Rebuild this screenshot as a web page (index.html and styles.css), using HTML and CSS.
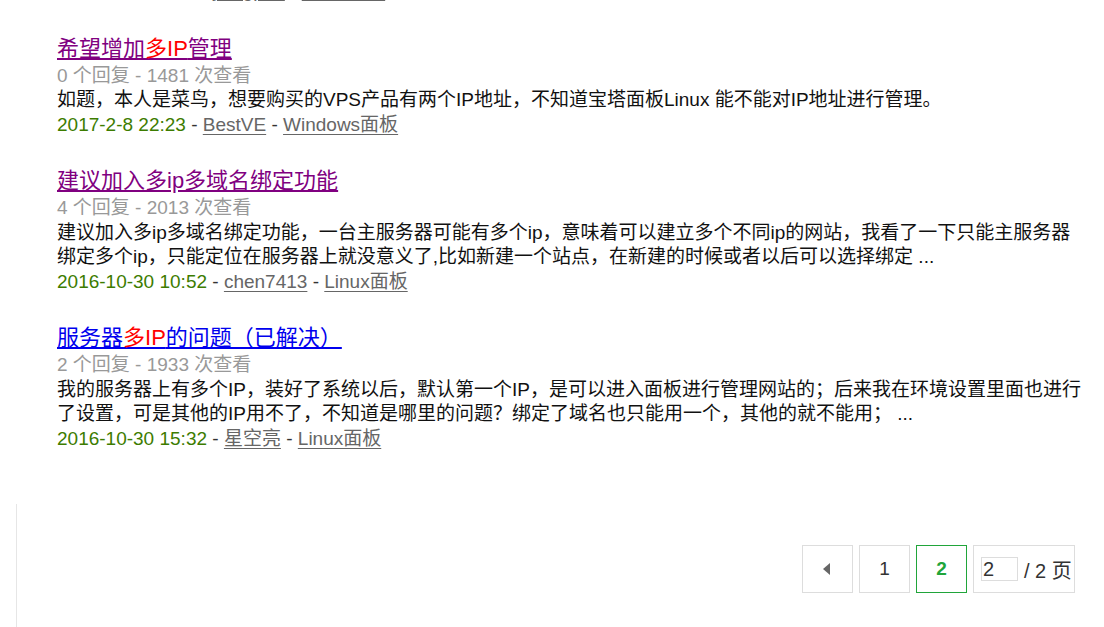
FILE: index.html
```html
<!DOCTYPE html>
<html lang="zh-CN">
<head>
    <meta charset="UTF-8" />
    <title>搜索结果 - 多IP</title>
    <link rel="stylesheet" href="styles.css">
</head>
<body>
<div class="topic-list">
    <!-- 上一条，已滚出视口 -->
    <div class="topic">
        <div class="topic-title"><a href="#">宝塔面板如何绑定<span class="hl">多IP</span></a></div>
        <div class="topic-stat">1 个回复 - 1022 次查看</div>
        <div class="topic-summary">请问宝塔面板怎么给站点绑定多个IP？</div>
        <div class="topic-meta"><span class="topic-date">2016-11-2 16:08</span> - <a href="#">yangpu1</a> - <a href="#">Linux面板</a></div>
    </div>

    <div class="topic">
        <div class="topic-title"><a href="#" class="visited">希望增加<span class="hl">多IP</span>管理</a></div>
        <div class="topic-stat">0 个回复 - 1481 次查看</div>
        <div class="topic-summary">如题，本人是菜鸟，想要购买的VPS产品有两个IP地址，不知道宝塔面板Linux 能不能对IP地址进行管理。</div>
        <div class="topic-meta"><span class="topic-date">2017-2-8 22:23</span> - <a href="#">BestVE</a> - <a href="#">Windows面板</a></div>
    </div>

    <div class="topic">
        <div class="topic-title"><a href="#" class="visited">建议加入多ip多域名绑定功能</a></div>
        <div class="topic-stat">4 个回复 - 2013 次查看</div>
        <div class="topic-summary">建议加入多ip多域名绑定功能，一台主服务器可能有多个ip，意味着可以建立多个不同ip的网站，我看了一下只能主服务器绑定多个ip，只能定位在服务器上就没意义了,比如新建一个站点，在新建的时候或者以后可以选择绑定 ...</div>
        <div class="topic-meta"><span class="topic-date">2016-10-30 10:52</span> - <a href="#">chen7413</a> - <a href="#">Linux面板</a></div>
    </div>

    <div class="topic">
        <div class="topic-title"><a href="#">服务器<span class="hl">多IP</span>的问题（已解决）</a></div>
        <div class="topic-stat">2 个回复 - 1933 次查看</div>
        <div class="topic-summary">我的服务器上有多个IP，装好了系统以后，默认第一个IP，是可以进入面板进行管理网站的；后来我在环境设置里面也进行了设置，可是其他的IP用不了，不知道是哪里的问题？绑定了域名也只能用一个，其他的就不能用； ...</div>
        <div class="topic-meta"><span class="topic-date">2016-10-30 15:32</span> - <a href="#">星空亮</a> - <a href="#">Linux面板</a></div>
    </div>
</div>

<div class="pager-wrap">
    <div class="pager">
        <a href="#" class="pager-item pager-prev"><span class="arrow-left"></span></a>
        <a href="#" class="pager-item">1</a>
        <span class="pager-item current">2</span>
        <span class="pager-item pager-jump"><input type="text" value="2" /> / 2 页</span>
    </div>
</div>
</body>
</html>
```

FILE: styles.css
```css
* {
    box-sizing: border-box;
    margin: 0;
    padding: 0;
}

body {
    font-family: "Liberation Sans", Arial, "Noto Sans CJK SC", sans-serif;
    font-size: 19px;
    color: #000;
    background: #fff;
    overflow: hidden;
}

/* 帖子列表 */
.topic-list {
    margin-top: -100px;
    padding: 0 16px 0 57px;
}

.topic {
    margin-bottom: 29px;
}

.topic:first-child {
    margin-bottom: 30px;
}

.topic-title {
    font-size: 22px;
    line-height: 30px;
}

.topic-title a {
    color: #0000ee;
}

.topic-title a.visited {
    color: #800080;
}

.topic-title .hl {
    color: #f00;
}

.topic-stat,
.topic-summary,
.topic-meta {
    line-height: 24.5px;
}

.topic-stat {
    color: #999;
}

.topic-summary {
    color: #111;
}

.topic-meta {
    color: #333;
}

.topic-date {
    color: #3d7c00;
}

.topic-meta a {
    color: #666;
    text-underline-offset: 3px;
}

/* 分页 */
.pager-wrap {
    margin: 53px 0 0 16px;
    border-left: 1px solid #e6e6e6;
    padding: 41px 29px 35px 0;
    display: flex;
    justify-content: flex-end;
}

.pager {
    display: flex;
    gap: 6px;
}

.pager-item {
    display: flex;
    align-items: center;
    justify-content: center;
    min-width: 51px;
    height: 48px;
    border: 1px solid #ddd;
    color: #333;
    text-decoration: none;
    font-size: 19px;
}

.pager-item.current {
    border-color: #20a53a;
    color: #20a53a;
    font-weight: bold;
}

.arrow-left {
    width: 0;
    height: 0;
    border-top: 6px solid transparent;
    border-bottom: 6px solid transparent;
    border-right: 7px solid #666;
    margin-left: -2px;
}

.pager-jump {
    width: 102px;
    justify-content: flex-start;
    padding-left: 7px;
    gap: 6px;
    font-size: 20px;
}

.pager-jump input {
    width: 37px;
    height: 24px;
    border: 1px solid #ddd;
    font-family: inherit;
    font-size: 20px;
    color: #333;
    padding-left: 1px;
}
```
